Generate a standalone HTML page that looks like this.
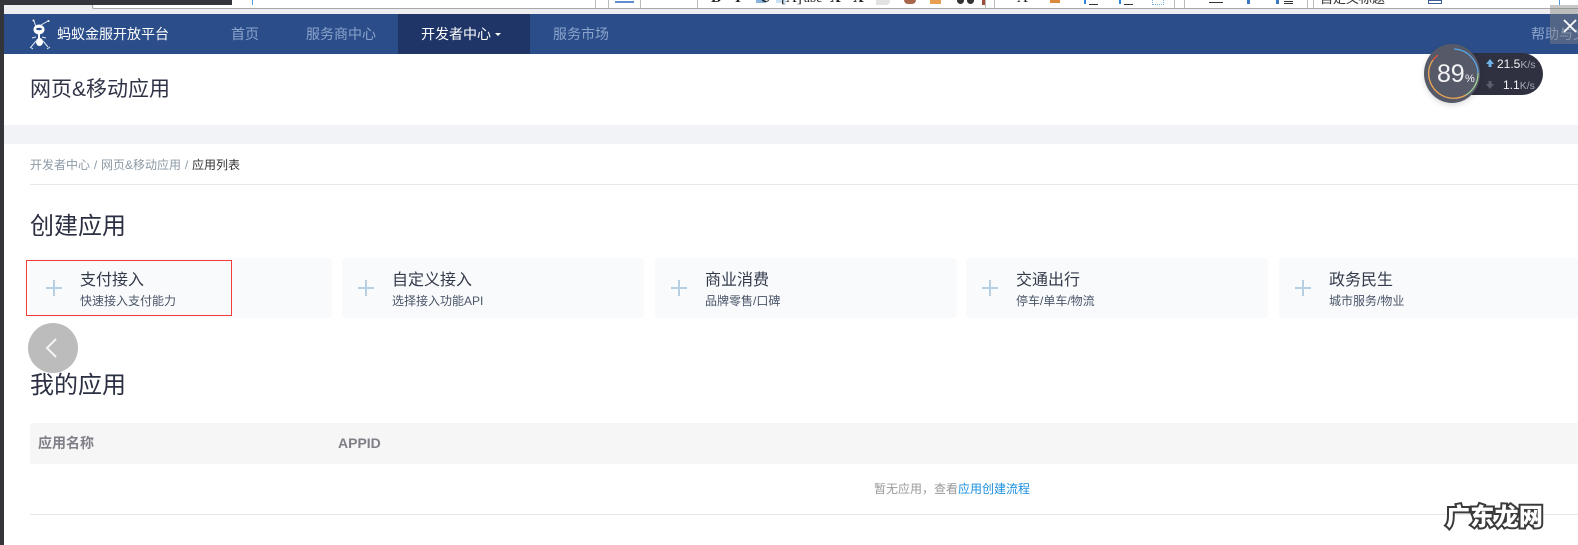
<!DOCTYPE html>
<html lang="zh-CN">
<head>
<meta charset="utf-8">
<title>网页&amp;移动应用</title>
<style>
html,body{margin:0;padding:0;background:#fff}
body{width:1578px;height:545px;position:relative;overflow:hidden;font-family:"Liberation Sans","Noto Sans CJK SC",sans-serif;color:#2b2f42}
.a{position:absolute}
.t{position:absolute;white-space:nowrap;line-height:20px}
.nav{position:absolute;left:4px;right:0;top:14px;height:40px;background:#2b4e8a}
.n{position:absolute;white-space:nowrap;line-height:20px;font-size:14px;top:24px;color:#8aa3cb}
.card{position:absolute;top:258px;height:60px;width:302px;background:#f8fafc;border-radius:4px}
.card i{position:absolute;left:16px;top:22px;width:16px;height:16px;background:linear-gradient(#b6cfe2,#b6cfe2) 0 7px/16px 2px no-repeat,linear-gradient(#b6cfe2,#b6cfe2) 7px 0/2px 16px no-repeat}
.card b{position:absolute;left:50px;top:11px;font-weight:400;font-size:16px;line-height:24px;color:#333a4a;white-space:nowrap}
.card span{position:absolute;left:50px;top:34px;font-size:12px;line-height:18px;color:#4a5568;white-space:nowrap}
.tb{position:absolute;left:590px;right:0;top:0;height:8px;overflow:hidden}
.tb span{position:absolute;white-space:nowrap;line-height:16px;top:-10px;font-family:"Liberation Serif",serif;font-size:15px;color:#222;font-weight:700}
.tb u{position:absolute;top:0;width:1px;height:8px;background:#bbb}
.tb s{position:absolute;display:block}
</style>
</head>
<body>
<!-- toolbar -->
<div class="a" style="left:0;top:0;width:1578px;height:14px;background:#eeeef0"></div>
<div class="a" style="left:232px;top:0;width:1346px;height:5px;background:#fff"></div>
<div class="a" style="left:92px;top:5px;width:1486px;height:3px;background:#fff;border-bottom:1px solid #a8a8aa;border-left:1px solid #a8a8aa;border-bottom-left-radius:2px"></div>
<div class="a" style="left:0;top:0;width:232px;height:5px;background:#34353a"></div>
<div class="a" style="left:252px;top:0;width:1px;height:5px;background:#4a9be0"></div>
<div class="tb">
  <u style="left:5px"></u><u style="left:18px"></u><u style="left:50px"></u><u style="left:107px"></u>
  <s style="left:25px;top:1px;width:19px;height:2px;background:#5e8fcc"></s>
  <s style="left:166px;top:0;width:10px;height:3px;background:#8ab4e0"></s>
  <s style="left:186px;top:0;width:10px;height:3px;background:#c8e0f4"></s>
  <span style="left:121px">B</span><span style="left:145px">I</span><span style="left:170px">U</span>
  <span style="left:191px;font-weight:400">[A]</span><span style="left:214px;font-weight:400;font-size:13px">abc</span>
  <span style="left:240px">X</span><span style="left:263px">X</span>
  <s style="left:286px;top:0;width:14px;height:5px;background:#e2e2e2;border-radius:0 0 4px 0"></s>
  <s style="left:314px;top:0;width:12px;height:4px;background:#a8664a;border-radius:0 0 6px 6px"></s>
  <s style="left:340px;top:0;width:11px;height:4px;background:#e8a050"></s>
  <s style="left:367px;top:0;width:7px;height:4px;background:#333;border-radius:0 0 4px 4px"></s>
  <s style="left:377px;top:0;width:7px;height:4px;background:#333;border-radius:0 0 4px 4px"></s>
  <s style="left:392px;top:0;width:3px;height:5px;background:#a0503a"></s>
  <u style="left:404px"></u><u style="left:395px"></u>
  <span style="left:427px;font-weight:400">A</span>
  <s style="left:460px;top:0;width:10px;height:3px;background:#d98a3a"></s>
  <s style="left:494px;top:0;width:2px;height:4px;background:#2f86d8"></s><s style="left:499px;top:4px;width:9px;height:1px;background:#333"></s>
  <s style="left:529px;top:0;width:2px;height:4px;background:#2f86d8"></s><s style="left:534px;top:4px;width:9px;height:1px;background:#333"></s>
  <s style="left:562px;top:0;width:12px;height:5px;border:1px dotted #7ab0e0;border-top:0;box-sizing:border-box"></s>
  <u style="left:584px"></u><u style="left:594px"></u><u style="left:717px"></u><u style="left:723px"></u>
  <s style="left:619px;top:2px;width:14px;height:1px;background:#333"></s>
  <s style="left:657px;top:0;width:3px;height:4px;background:#3a78c0"></s>
  <s style="left:686px;top:0;width:3px;height:4px;background:#3a78c0"></s><s style="left:694px;top:1px;width:9px;height:1px;background:#333"></s><s style="left:694px;top:3px;width:9px;height:1px;background:#333"></s>
  <span style="left:730px;top:-9px;font-family:'Liberation Sans','Noto Sans CJK SC',sans-serif;font-weight:400;font-size:13px;color:#333">自定义标题</span>
  <s style="left:838px;top:0;width:12px;height:2px;background:#fff;border:1px solid #3a5f9a"></s>
  <s style="left:969px;top:0;width:1px;height:5px;background:#4a9be0"></s>
</div>

<!-- left strip -->
<div class="a" style="left:0;top:0;width:4px;height:545px;background:#34353a;z-index:5"></div>

<!-- nav -->
<div class="nav"></div>
<div class="a" style="left:398px;top:14px;width:132px;height:40px;background:#1f3568"></div>
<svg class="a" style="left:29px;top:18px" width="23" height="33" viewBox="0 0 23 33" fill="none">
  <path d="M7 9 L5 3 M12 7 L19 3" stroke="#e8edf5" stroke-width="1"/>
  <circle cx="4.5" cy="2.5" r="1" fill="#fff"/><circle cx="19.5" cy="3" r="1" fill="#fff"/>
  <ellipse cx="10" cy="11.5" rx="5.5" ry="5" fill="#fff"/>
  <ellipse cx="10" cy="11" rx="3" ry="1.3" fill="#2b4e8a"/>
  <ellipse cx="10.5" cy="24" rx="3.5" ry="4" fill="#fff"/>
  <path d="M10 16v5" stroke="#fff" stroke-width="2"/>
  <path d="M7 23 L2 29 M14 23 L19 29 M1 29 L4 31 M18 31 L21 29 M7 19 L3 20 M13 19 L17 20" stroke="#dfe6f0" stroke-width="1"/>
</svg>
<div class="t" style="left:57px;top:24px;font-size:14px;color:#fff">蚂蚁金服开放平台</div>
<div class="n" style="left:231px">首页</div>
<div class="n" style="left:306px">服务商中心</div>
<div class="n" style="left:421px;color:#fff">开发者中心</div>
<div class="a" style="left:495px;top:33px;width:0;height:0;border-left:3.5px solid transparent;border-right:3.5px solid transparent;border-top:3.5px solid #fff"></div>
<div class="n" style="left:553px">服务市场</div>
<div class="n" style="left:1531px">帮助与文档</div>

<!-- close box -->
<div class="a" style="left:1550px;top:5px;width:28px;height:39px;background:rgba(130,130,130,.45)"></div>
<svg class="a" style="left:1563px;top:19px" width="14" height="14" viewBox="0 0 14 14"><path d="M1 1 L13 13 M13 1 L1 13" stroke="#fff" stroke-width="1.8"/></svg>

<!-- title -->
<div class="t" style="left:30px;top:78px;font-size:21px;line-height:24px;color:#2f3346">网页&amp;移动应用</div>
<div class="a" style="left:4px;top:125px;width:1574px;height:19px;background:#f1f3f7"></div>

<!-- breadcrumb -->
<div class="t" style="left:30px;top:155px;font-size:12px;color:#8b9aa6;word-spacing:.5px">开发者中心 / 网页&amp;移动应用 / <span style="color:#333">应用列表</span></div>
<div class="a" style="left:30px;top:184px;width:1548px;height:1px;background:#e8e8e8"></div>

<div class="t" style="left:30px;top:215px;font-size:24px;line-height:24px;color:#2b2f42">创建应用</div>

<!-- cards -->
<div class="card" style="left:30px"><i></i><b>支付接入</b><span>快速接入支付能力</span></div>
<div class="card" style="left:342px"><i></i><b>自定义接入</b><span>选择接入功能API</span></div>
<div class="card" style="left:655px"><i></i><b>商业消费</b><span>品牌零售/口碑</span></div>
<div class="card" style="left:966px"><i></i><b>交通出行</b><span>停车/单车/物流</span></div>
<div class="card" style="left:1279px;width:299px"><i></i><b>政务民生</b><span>城市服务/物业</span></div>
<div class="a" style="left:26px;top:260px;width:206px;height:56px;box-sizing:border-box;border:1px solid #f23c3c"></div>

<!-- back -->
<div class="a" style="left:28px;top:323px;width:50px;height:50px;border-radius:50%;background:#bcbcbc"></div>
<svg class="a" style="left:44px;top:337px" width="14" height="22" viewBox="0 0 14 22"><path d="M12 2 L3 11 L12 20" fill="none" stroke="#f4f4f4" stroke-width="2"/></svg>

<div class="t" style="left:30px;top:374px;font-size:24px;line-height:24px;color:#2b2f42">我的应用</div>

<!-- table -->
<div class="a" style="left:30px;top:423px;width:1548px;height:41px;background:#f6f6f6;border-radius:3px 0 0 0"></div>
<div class="t" style="left:38px;top:433px;font-size:14px;font-weight:700;color:#7f7f88">应用名称</div>
<div class="t" style="left:338px;top:433px;font-size:14px;font-weight:700;color:#7f7f88">APPID</div>
<div class="t" style="left:874px;top:479px;font-size:12px;color:#999">暂无应用，查看<span style="color:#1a8fe0">应用创建流程</span></div>
<div class="a" style="left:30px;top:514px;width:1548px;height:1px;background:#e8e8e8"></div>

<!-- speed widget -->
<div class="a" style="left:1452px;top:53px;width:91px;height:42px;border-radius:0 21px 21px 0;background:#2f3140"></div>
<div class="a" style="left:1424px;top:44px;width:56px;height:59px;border-radius:50%;background:#565a68;box-shadow:0 2px 6px rgba(0,0,0,.15)"></div>
<svg class="a" style="left:1424px;top:44px" width="58" height="60" viewBox="0 0 58 60" fill="none">
  <path d="M30 5 A25 25 0 0 1 54 29" stroke="#5aa6e8" stroke-width="1.2"/>
  <path d="M54 29 A25 25 0 0 1 42 51" stroke="#a8dc9c" stroke-width="1.2"/>
  <path d="M42 51 A25 25 0 0 1 5 25 A25 25 0 0 1 9 16" stroke="#eda652" stroke-width="1.3"/>
  <path d="M9 16 A25 25 0 0 1 14 11" stroke="#e0553c" stroke-width="1.3"/>
</svg>
<div class="t" style="left:1437px;top:60px;font-size:25px;line-height:28px;color:#f4f4f6;letter-spacing:-.2px">89</div>
<div class="t" style="left:1465px;top:69px;font-size:11px;color:#f4f4f6">%</div>
<svg class="a" style="left:1485px;top:58px" width="10" height="10" viewBox="0 0 10 10"><path d="M5 1 L9 6 H6.5 V9 H3.5 V6 H1 Z" fill="#6fb2e6"/></svg>
<svg class="a" style="left:1485px;top:80px" width="10" height="10" viewBox="0 0 10 10"><path d="M5 9 L9 4 H6.5 V1 H3.5 V4 H1 Z" fill="#5c5f6b"/></svg>
<div class="t" style="left:1497px;top:54px;font-size:12px;color:#f4f4f6">21.5<span style="color:#a6a9b4;font-size:10.5px">K/s</span></div>
<div class="t" style="left:1503px;top:75px;font-size:12px;color:#f4f4f6">1.1<span style="color:#a6a9b4;font-size:10.5px">K/s</span></div>

<!-- watermark -->
<div class="t" style="left:1446px;top:503px;font-size:24px;line-height:24px;font-weight:900;color:#fff;font-family:'Noto Sans CJK SC',sans-serif;-webkit-text-stroke:4px #3a3a3a;paint-order:stroke fill;letter-spacing:.3px">广东龙网</div>
</body>
</html>
